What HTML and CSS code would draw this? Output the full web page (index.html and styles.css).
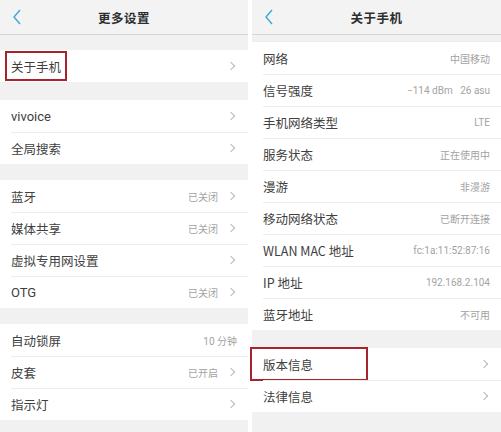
FILE: index.html
```html
<!DOCTYPE html>
<html>
<head>
<meta charset="utf-8">
<link rel="stylesheet" href="styles.css">
</head>
<body>
<div class="screens">
  <div class="panel">
    <div class="header">
      <svg class="back" width="10" height="16" viewBox="0 0 10 16"><path d="M8 1 L2 8 L8 15" fill="none" stroke="#3aa9d6" stroke-width="1.4"/></svg>
      <div class="title">更多设置</div>
    </div>
    <div class="gap g15"></div>
    <div class="group">
      <div class="row"><span class="label">关于手机</span><span class="chev"></span><div class="mark mark-left"></div></div>
    </div>
    <div class="gap g18"></div>
    <div class="group">
      <div class="row"><span class="label latin">vivoice</span><span class="chev"></span></div>
      <div class="row"><span class="label">全局搜索</span><span class="chev"></span></div>
    </div>
    <div class="gap g16"></div>
    <div class="group">
      <div class="row"><span class="label">蓝牙</span><span class="value">已关闭</span><span class="chev"></span></div>
      <div class="row"><span class="label">媒体共享</span><span class="value">已关闭</span><span class="chev"></span></div>
      <div class="row"><span class="label">虚拟专用网设置</span><span class="chev"></span></div>
      <div class="row"><span class="label latin">OTG</span><span class="value">已关闭</span><span class="chev"></span></div>
    </div>
    <div class="gap g16"></div>
    <div class="group">
      <div class="row"><span class="label">自动锁屏</span><span class="value">10 分钟</span></div>
      <div class="row"><span class="label">皮套</span><span class="value">已开启</span><span class="chev"></span></div>
      <div class="row"><span class="label">指示灯</span><span class="chev"></span></div>
    </div>
  </div>
  <div class="panel">
    <div class="header">
      <svg class="back" width="10" height="16" viewBox="0 0 10 16"><path d="M8 1 L2 8 L8 15" fill="none" stroke="#3aa9d6" stroke-width="1.4"/></svg>
      <div class="title">关于手机</div>
    </div>
    <div class="gap g7"></div>
    <div class="group">
      <div class="row"><span class="label">网络</span><span class="value">中国移动</span></div>
      <div class="row"><span class="label">信号强度</span><span class="value">−114 dBm&nbsp;&nbsp;&nbsp;26 asu</span></div>
      <div class="row"><span class="label">手机网络类型</span><span class="value">LTE</span></div>
      <div class="row"><span class="label">服务状态</span><span class="value">正在使用中</span></div>
      <div class="row"><span class="label">漫游</span><span class="value">非漫游</span></div>
      <div class="row"><span class="label">移动网络状态</span><span class="value">已断开连接</span></div>
      <div class="row"><span class="label">WLAN MAC 地址</span><span class="value">fc:1a:11:52:87:16</span></div>
      <div class="row"><span class="label">IP 地址</span><span class="value">192.168.2.104</span></div>
      <div class="row"><span class="label">蓝牙地址</span><span class="value">不可用</span></div>
    </div>
    <div class="gap g18"></div>
    <div class="group">
      <div class="row"><span class="label">版本信息</span><span class="chev"></span><div class="mark mark-right"></div></div>
      <div class="row"><span class="label">法律信息</span><span class="chev"></span></div>
    </div>
  </div>
</div>
</body>
</html>
```
FILE: styles.css
```css
html, body {
  margin: 0;
  padding: 0;
  background: #ffffff;
}
body {
  width: 501px;
  height: 432px;
  overflow: hidden;
  font-family: "Noto Sans CJK SC", "Noto Sans", sans-serif;
}
.screens {
  display: flex;
  gap: 4px;
  height: 432px;
}
.panel {
  background: #f1f1f1;
  height: 432px;
  display: flex;
  flex-direction: column;
}
.panel:first-child { width: 248px; }
.panel:last-child { width: 249px; }
.header {
  height: 34px;
  border-bottom: 1px solid #d6d6d6;
  background: #f3f3f3;
  display: flex;
  align-items: center;
  justify-content: center;
  position: relative;
  flex-shrink: 0;
}
.back {
  position: absolute;
  left: 12px;
  top: 9px;
}
.title {
  font-size: 12.5px;
  color: #2e2e2e;
  font-weight: 700;
  letter-spacing: 0.5px;
}
.gap { flex-shrink: 0; }
.g7 { height: 7px; border-bottom: 1px solid #ececec; box-sizing: border-box; }
.g15 { height: 15px; }
.g16 { height: 16px; }
.g18 { height: 18px; }
.group {
  background: #fff;
  flex-shrink: 0;
}
.row {
  height: 32px;
  display: flex;
  align-items: center;
  padding: 0 11px 0 11px;
  position: relative;
  box-sizing: border-box;
}
.row + .row::before {
  content: "";
  position: absolute;
  left: 11px;
  right: 0;
  top: 0;
  height: 1px;
  background: #ececec;
}
.label {
  font-size: 12.5px;
  color: #404040;
  flex: 1;
  white-space: nowrap;
}
.label.latin {
  font-family: Roboto, "Noto Sans CJK SC", sans-serif;
  font-size: 13px;
}
.value {
  font-size: 10px;
  color: #a3a3a3;
  white-space: nowrap;
  font-family: Roboto, "Noto Sans CJK SC", sans-serif;
}
.chev {
  width: 5px;
  height: 5px;
  border-top: 1px solid #b8b8b8;
  border-right: 1px solid #b8b8b8;
  transform: rotate(45deg);
  margin-left: 10px;
  margin-right: 3px;
}
.mark {
  position: absolute;
  border: 2px solid #a8242c;
  box-sizing: border-box;
}
.mark-left {
  left: 5px;
  top: 1px;
  width: 62px;
  height: 30px;
}
.mark-right {
  left: -2px;
  top: -1px;
  width: 118px;
  height: 34px;
}
```
